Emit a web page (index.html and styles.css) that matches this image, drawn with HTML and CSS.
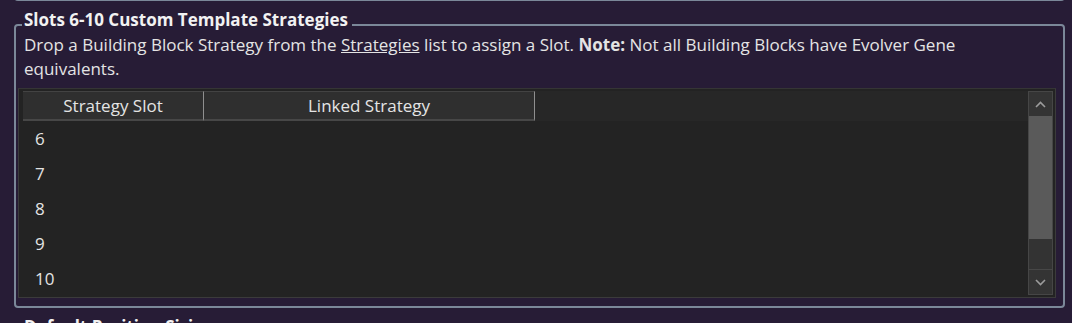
FILE: index.html
```html
<!DOCTYPE html>
<html lang="en">
<head>
  <meta charset="UTF-8">
  <title>Custom Template Strategies</title>
  <link rel="stylesheet" href="styles.css">
</head>
<body>
  <div class="prev-group"></div>

  <fieldset class="group">
    <legend>Slots 6-10 Custom Template Strategies</legend>
    <p class="hint">Drop a Building Block Strategy from the <a href="#">Strategies</a> list to assign a Slot. <b>Note:</b> Not all Building Blocks have Evolver Gene equivalents.</p>

    <div class="grid">
      <div class="grid-main">
        <div class="grid-head">
          <div class="col col-slot">Strategy Slot</div>
          <div class="col col-linked">Linked Strategy</div>
        </div>
        <div class="row">6</div>
        <div class="row">7</div>
        <div class="row">8</div>
        <div class="row">9</div>
        <div class="row">10</div>
      </div>
      <div class="scrollbar">
        <div class="sb-btn">
          <svg width="11" height="7" viewBox="0 0 11 7"><path d="M1 6 L5.5 1.5 L10 6" fill="none" stroke="#9c9c9c" stroke-width="1.6"/></svg>
        </div>
        <div class="sb-thumb"></div>
        <div class="sb-track"></div>
        <div class="sb-btn">
          <svg width="11" height="7" viewBox="0 0 11 7"><path d="M1 1 L5.5 5.5 L10 1" fill="none" stroke="#9c9c9c" stroke-width="1.6"/></svg>
        </div>
      </div>
    </div>
  </fieldset>

  <fieldset class="group next-group">
    <legend>Default Position Sizing</legend>
  </fieldset>
</body>
</html>
```

FILE: styles.css
```css
/* Page */
body {
  margin: 0;
  height: 323px;
  overflow: hidden;
  background: #271c36;
  font-family: "Open Sans", "Noto Sans", sans-serif;
  font-size: 17px;
  color: #e4e4e4;
}

/* Bottom edge of the group above */
.prev-group {
  height: 20px;
  margin: -21px 7px 0 14px;
  border: 2px solid #7b8899;
  border-top: none;
  border-radius: 0 0 4px 4px;
}

/* Group box */
.group {
  min-width: 0;
  margin: 9px 7px 0 14px;
  padding: 0 7px 8px 2px;
  border: 2px solid #7b8899;
  border-radius: 4px;
}
.group legend {
  margin-left: 4px;
  padding: 0 4px 10px 2px;
  font-weight: 700;
  line-height: 20px;
  color: #f2f2f2;
}
.next-group {
  margin-top: 9px;
  height: 40px;
}

.hint {
  margin: -7px 0 7px;
  padding: 0 20px 0 6px;
  line-height: 24px;
}
.hint a {
  color: inherit;
}

/* Data grid */
.grid {
  display: flex;
  height: 204px;
  padding: 2px 2px 2px 4px;
  background: #232323;
  border: 1px solid #3b3b3b;
  border-top-color: #353535;
}
.grid-main {
  flex: 1;
  overflow: hidden;
}
.grid-head {
  display: flex;
  height: 30px;
  background: #272727;
}
.col {
  display: flex;
  align-items: center;
  justify-content: center;
  box-sizing: border-box;
  background: #2f2f2f;
  border-top: 1px solid #434343;
  border-bottom: 2px solid #474747;
  border-right: 1px solid #8f8f8f;
}
.col-slot {
  width: 181px;
}
.col-linked {
  width: 331px;
}
.row {
  height: 35px;
  line-height: 35px;
  padding-left: 12px;
}

/* Scrollbar */
.scrollbar {
  display: flex;
  flex-direction: column;
  width: 25px;
  box-sizing: border-box;
  border: 1px solid #464646;
  background: #333333;
}
.sb-btn {
  height: 24px;
  display: flex;
  align-items: center;
  justify-content: center;
  background: #343434;
}
.sb-btn:last-child {
  border-top: 1px solid #474747;
}
.sb-thumb {
  height: 123px;
  background: #5a5a5a;
}
.sb-track {
  flex: 1;
}
```
